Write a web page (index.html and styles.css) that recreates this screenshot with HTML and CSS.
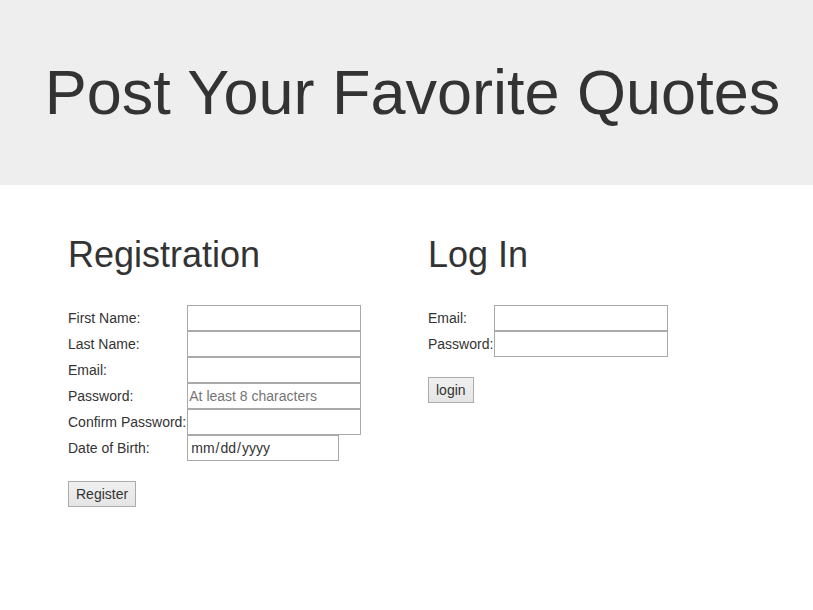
FILE: index.html
```html
<!DOCTYPE html>
<html>
<head>
<meta charset="utf-8">
<link rel="stylesheet" href="styles.css">
</head>
<body>
<header class="hero">
  <h1 class="hero-title">Post Your Favorite Quotes</h1>
</header>
<main class="content">
  <section class="panel panel-register">
    <h2 class="panel-title">Registration</h2>
    <form class="form">
      <div class="fields">
        <label class="field-label">First Name:</label><input class="field-input" type="text">
        <label class="field-label">Last Name:</label><input class="field-input" type="text">
        <label class="field-label">Email:</label><input class="field-input" type="text">
        <label class="field-label">Password:</label><input class="field-input" type="password" placeholder="At least 8 characters">
        <label class="field-label">Confirm Password:</label><input class="field-input" type="password">
        <label class="field-label">Date of Birth:</label><input class="field-input field-date" type="date">
      </div>
      <button class="btn" type="button">Register</button>
    </form>
  </section>
  <section class="panel panel-login">
    <h2 class="panel-title">Log In</h2>
    <form class="form">
      <div class="fields">
        <label class="field-label">Email:</label><input class="field-input" type="text">
        <label class="field-label">Password:</label><input class="field-input" type="password">
      </div>
      <button class="btn" type="button">login</button>
    </form>
  </section>
</main>
</body>
</html>
```
FILE: styles.css
```css
* { box-sizing: border-box; }
body {
  margin: 0;
  font-family: "Liberation Sans", Arial, sans-serif;
  font-size: 14px;
  color: #333;
  background: #fff;
}
.hero {
  background: #eeeeee;
  height: 185px;
  display: flex;
  align-items: center;
  justify-content: center;
  padding-left: 12px;
}
.hero-title {
  margin: 0;
  font-size: 63px;
  font-weight: 400;
  line-height: 1.1;
  color: #333;
}
.content {
  display: flex;
  padding: 50px 0 0 68px;
}
.panel-register { width: 360px; }
.panel-title {
  margin: 0 0 30px;
  font-size: 36px;
  font-weight: 400;
  line-height: 40px;
  color: #333;
}
.fields {
  display: grid;
  grid-template-columns: max-content max-content;
  align-items: center;
  margin-bottom: 20px;
}
.field-label {
  color: #333;
  font-size: 14px;
  padding-right: 1px;
}
.field-input {
  width: 174px;
  height: 26px;
  margin: 0;
  border: 1px solid #a9a9a9;
  padding: 0 1px;
  font-family: "Liberation Sans", Arial, sans-serif;
  font-size: 14px;
  color: #333;
  background: #fff;
}
.field-input::placeholder { color: #757575; }
.field-date {
  width: 152px;
  padding-left: 2px;
}
.field-date::-webkit-calendar-picker-indicator { display: none; }
.field-date::-webkit-datetime-edit { color: #333; }
.btn {
  display: block;
  height: 26px;
  padding: 0 7px;
  font-family: "Liberation Sans", Arial, sans-serif;
  font-size: 14px;
  color: #333;
  border: 1px solid #acacac;
  border-radius: 0;
  background: linear-gradient(#f0f0f0, #e5e5e5);
}
```
